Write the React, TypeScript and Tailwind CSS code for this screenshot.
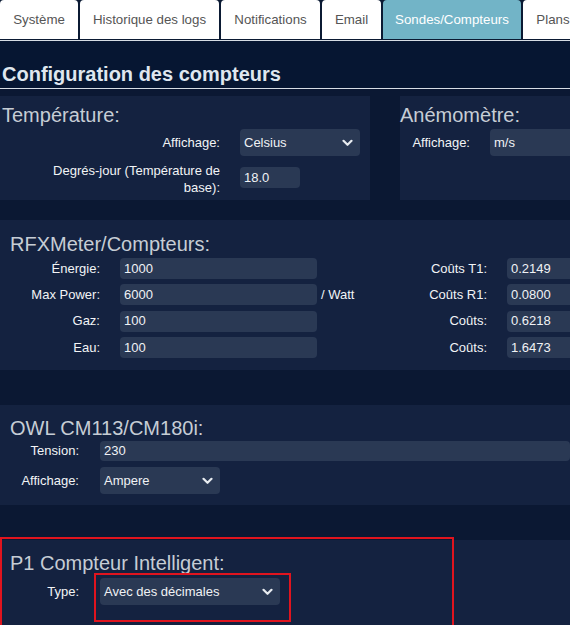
import React from "react";

const Chevron = () => (
  <svg width="11" height="8" viewBox="0 0 11 8" className="shrink-0">
    <path d="M1.5 1.8 L5.5 5.8 L9.5 1.8" fill="none" stroke="#e8ecf0" strokeWidth="2.2" strokeLinecap="round" strokeLinejoin="round" />
  </svg>
);

const Select = ({ value, w }: { value: string; w: string }) => (
  <div className={`${w} h-[27px] rounded-[4px] bg-[#2a3954] flex items-center justify-between pl-[4px] pr-[7px] text-[13px] text-[#f0f2f5] shrink-0`}>
    <span>{value}</span>
    <Chevron />
  </div>
);

const Input = ({ value, w, h = "h-[21px]" }: { value: string; w: string; h?: string }) => (
  <div className={`${w} ${h} rounded-[4px] bg-[#2a3954] flex items-center pl-[4px] text-[13px] text-[#f0f2f5] shrink-0`}>
    {value}
  </div>
);

const tabs = [
  { label: "Système", w: "w-[78px]" },
  { label: "Historique des logs", w: "w-[139px]" },
  { label: "Notifications", w: "w-[99px]" },
  { label: "Email", w: "w-[59px]" },
  { label: "Sondes/Compteurs", w: "w-[138px]", active: true },
  { label: "Plans", w: "w-[60px]" },
];

export default function App() {
  return (
    <div className="w-[570px] h-[625px] overflow-hidden bg-[#0b1833] font-['Liberation_Sans',Arial,sans-serif] relative">
      {/* Tabs */}
      <div className="flex gap-[2px] h-[40px] items-start bg-[#0b1a33] whitespace-nowrap">
        {tabs.map((t) => (
          <div
            key={t.label}
            className={`${t.w} h-[39px] rounded-t-[4px] flex items-center justify-center text-[13.3px] shrink-0 ${
              t.active ? "bg-[#72b4c7] text-white" : "bg-white text-[#555555]"
            }`}
          >
            {t.label}
          </div>
        ))}
      </div>
      <div className="h-px bg-[#d6dde5]" />
      {/* Title */}
      <div className="h-[47px] bg-[#061632] pt-[21px] pl-[2px]">
        <div className="text-[20px] leading-[24px] font-bold text-[#dfe7ef]">Configuration des compteurs</div>
      </div>
      <div className="h-px bg-[#d6dde5]" />

      {/* Température + Anémomètre */}
      <div className="flex mt-[7px] h-[104px]">
        <div className="w-[370px] shrink-0 bg-[#142240] pt-[7px] pl-[2px]">
          <div className="text-[20px] leading-[24px] text-[#c6cdd5]">Température:</div>
          <div className="flex items-center mt-[2px] -ml-[2px]">
            <div className="w-[220px] shrink-0 text-right text-[13px] text-[#f2f4f6]">Affichage:</div>
            <div className="ml-[20px] shrink-0">
              <Select value="Celsius" w="w-[120px]" />
            </div>
          </div>
          <div className="flex items-start mt-[6px] -ml-[2px]">
            <div className="w-[220px] shrink-0 pl-[40px] text-right text-[13px] leading-[17px] text-[#f2f4f6]">
              Degrés-jour (Température de base):
            </div>
            <div className="ml-[20px] mt-[5px] shrink-0">
              <Input value="18.0" w="w-[60px]" h="h-[21px]" />
            </div>
          </div>
        </div>
        <div className="ml-[30px] w-[200px] shrink-0 bg-[#142240] pt-[7px]">
          <div className="text-[20px] leading-[24px] text-[#c6cdd5] whitespace-nowrap">Anémomètre:</div>
          <div className="flex items-center mt-[2px]">
            <div className="w-[70px] shrink-0 text-right text-[13px] text-[#f2f4f6]">Affichage:</div>
            <div className="ml-[20px] shrink-0">
              <Select value="m/s" w="w-[120px]" />
            </div>
          </div>
        </div>
      </div>

      {/* RFXMeter */}
      <div className="mt-[20px] h-[150px] bg-[#142240] pt-[12px] pl-[10px]">
        <div className="text-[20px] leading-[24px] text-[#c6cdd5]">RFXMeter/Compteurs:</div>
        <div className="-ml-[10px] mt-[2px] flex flex-col gap-[5.3px]">
          {[
            ["Énergie:", "1000", "", "Coûts T1:", "0.2149"],
            ["Max Power:", "6000", "/ Watt", "Coûts R1:", "0.0800"],
            ["Gaz:", "100", "", "Coûts:", "0.6218"],
            ["Eau:", "100", "", "Coûts:", "1.6473"],
          ].map(([l, v, unit, rl, rv], i) => (
            <div key={i} className="flex items-center h-[21px] text-[13px] text-[#f2f4f6] whitespace-nowrap">
              <div className="w-[100px] shrink-0 text-right">{l}</div>
              <div className="ml-[20px] shrink-0">
                <Input value={v} w="w-[197px]" />
              </div>
              <div className="w-[170px] shrink-0 flex justify-between">
                <span className="pl-[4px]">{unit}</span>
                <span>{rl}</span>
              </div>
              <div className="ml-[20px] shrink-0">
                <Input value={rv} w="w-[100px]" />
              </div>
            </div>
          ))}
        </div>
      </div>

      {/* OWL */}
      <div className="mt-[35px] h-[100px] bg-[#142240] pt-[11px] pl-[10px]">
        <div className="text-[20px] leading-[24px] text-[#c6cdd5]">OWL CM113/CM180i:</div>
        <div className="-ml-[10px] mt-[1px] flex items-center">
          <div className="w-[79px] shrink-0 text-right text-[13px] text-[#f2f4f6]">Tension:</div>
          <div className="ml-[21px] flex-1">
            <Input value="230" w="w-full" h="h-[20px]" />
          </div>
        </div>
        <div className="-ml-[10px] mt-[6px] flex items-center">
          <div className="w-[79px] shrink-0 text-right text-[13px] text-[#f2f4f6]">Affichage:</div>
          <div className="ml-[21px] shrink-0">
            <Select value="Ampere" w="w-[120px]" />
          </div>
        </div>
      </div>

      {/* P1 */}
      <div className="mt-[35px] h-[90px] bg-[#142240] pt-[11px] pl-[10px]">
        <div className="text-[20px] leading-[24px] text-[#c6cdd5]">P1 Compteur Intelligent:</div>
        <div className="-ml-[10px] mt-[3px] flex items-center">
          <div className="w-[79px] shrink-0 text-right text-[13px] text-[#f2f4f6]">Type:</div>
          <div className="ml-[21px] shrink-0">
            <Select value="Avec des décimales" w="w-[180px]" />
          </div>
        </div>
      </div>

      {/* Red annotation boxes */}
      <div className="absolute left-0 top-[537px] w-[454px] h-[95px] border-[2px] border-[#e0141e] pointer-events-none" />
      <div className="absolute left-[94px] top-[573px] w-[197px] h-[49px] border-[2px] border-[#e0141e] pointer-events-none" />
    </div>
  );
}
